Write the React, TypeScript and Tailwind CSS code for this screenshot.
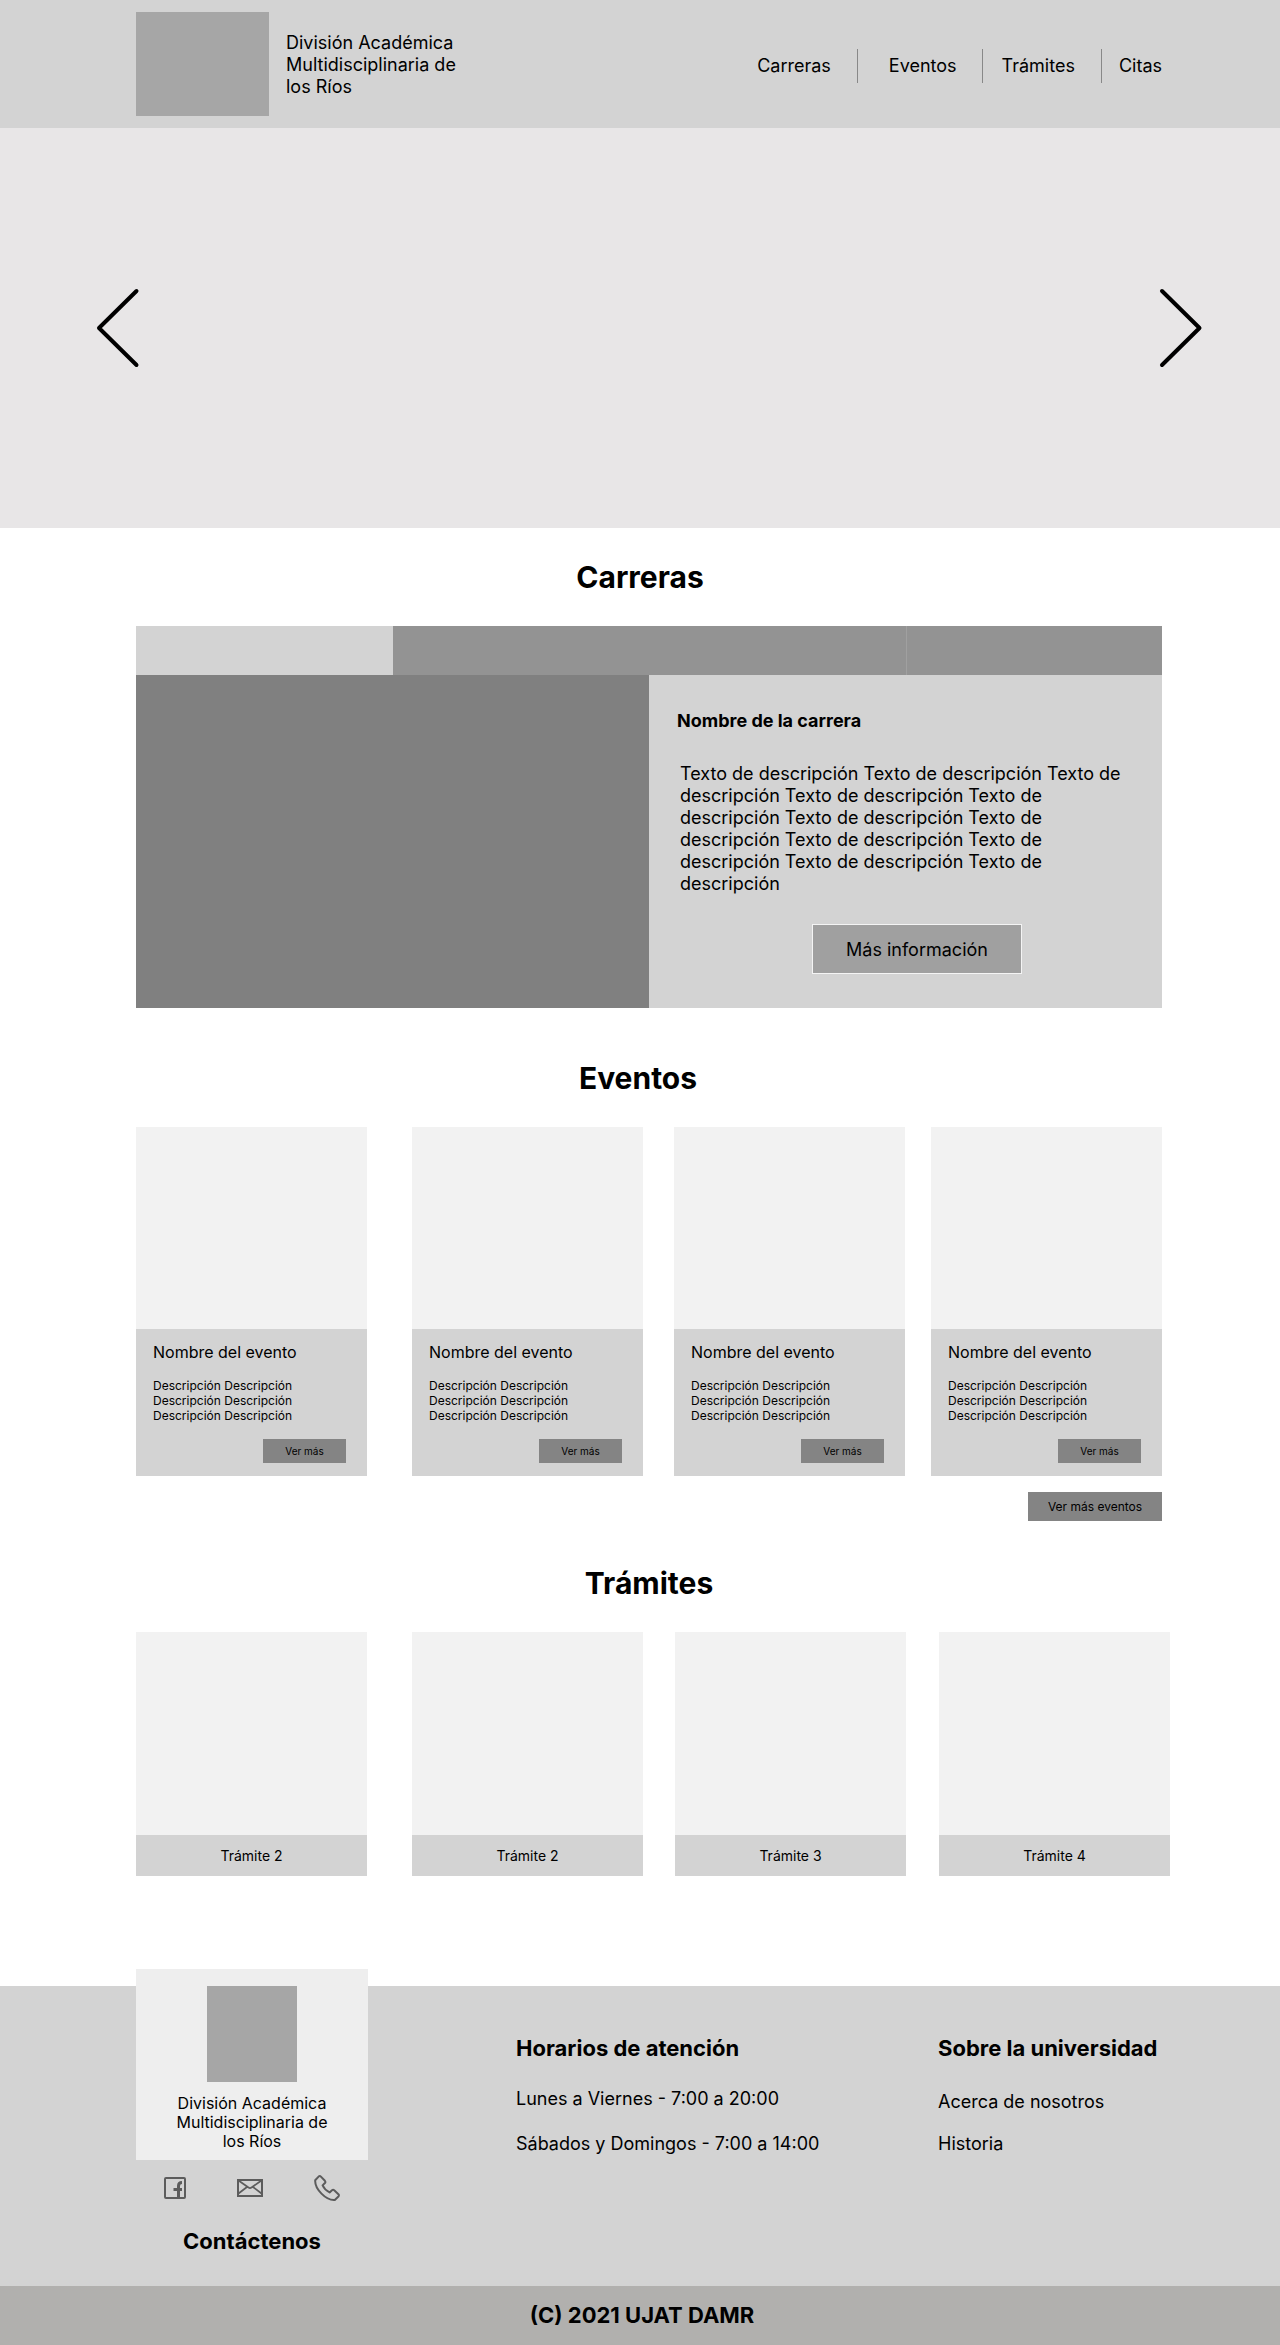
const tabs = ["Carrera 1", "Carrera 2", "Carrera 3", "Carrera 4"];
const events = [1, 2, 3, 4];
const procedures = ["Trámite 2", "Trámite 2", "Trámite 3", "Trámite 4"];

function Divider() {
  return <span className="h-[34px] w-px bg-[#888888]" />;
}

function Header() {
  return (
    <header className="flex items-center justify-between bg-[#d3d3d3] py-3 pr-[118px] pl-[136px]">
      <div className="flex items-center gap-[17px]">
        <div className="h-[104px] w-[133px] bg-[#a6a6a6]" />
        <p className="w-[176px] pt-0.5 text-[18px] leading-[22px]">
          División Académica Multidisciplinaria de los Ríos
        </p>
      </div>
      <nav className="flex items-center pt-1 text-[18px] leading-[22px]">
        <a href="#carreras" className="pr-[26px]">Carreras</a>
        <Divider />
        <a href="#eventos" className="pr-[25px] pl-[31px]">Eventos</a>
        <Divider />
        <a href="#tramites" className="pr-[26px] pl-[19px]">Trámites</a>
        <Divider />
        <a href="#citas" className="pl-[17px]">Citas</a>
      </nav>
    </header>
  );
}

function Hero() {
  return (
    <section className="flex h-[400px] items-center justify-between bg-[#e8e6e7] pr-[77px] pl-24">
      <button type="button" aria-label="Anterior">
        <svg width="44" height="82" viewBox="0 0 44 82" fill="none" stroke="#000" strokeWidth="4" strokeLinecap="round" strokeLinejoin="round">
          <path d="M40.500 4 3 41l37.500 37" />
        </svg>
      </button>
      <button type="button" aria-label="Siguiente">
        <svg width="44" height="82" viewBox="0 0 44 82" fill="none" stroke="#000" strokeWidth="4" strokeLinecap="round" strokeLinejoin="round">
          <path d="M3 4 40.500 41 3 78" />
        </svg>
      </button>
    </section>
  );
}

function Careers() {
  return (
    <section id="carreras">
      <h2 className="py-[31px] text-center text-[30px] leading-9 font-bold">Carreras</h2>
      <div className="pr-[118px] pl-[136px]">
        <div className="grid grid-cols-4" role="tablist">
          {tabs.map((tab, i) => (
            <button
              key={tab}
              type="button"
              role="tab"
              aria-label={tab}
              aria-selected={i === 0}
              className={
                i === 0
                  ? "h-[49px] bg-[#d3d3d3]"
                  : i === 3
                    ? "h-[49px] border-l border-[#a0a0a0] bg-[#939393]"
                    : "h-[49px] bg-[#939393]"
              }
            />
          ))}
        </div>
        <div className="grid grid-cols-2">
          <div className="bg-[#808080]" />
          <div className="flex flex-col bg-[#d3d3d3] pt-[35px] pr-6 pb-[34px] pl-7">
            <h3 className="text-[18px] leading-[22px] font-bold">Nombre de la carrera</h3>
            <p className="mt-[31px] pl-[3px] text-[18px] leading-[22px]">
              Texto de descripción Texto de descripción Texto de descripción Texto de descripción Texto de
              descripción Texto de descripción Texto de descripción Texto de descripción Texto de descripción
              Texto de descripción Texto de descripción
            </p>
            <button
              type="button"
              className="mt-[29px] mr-29 h-[50px] w-[210px] self-end border border-[#f4f4f4] bg-[#a0a0a0] pt-0.5 text-[18px] leading-[22px]"
            >
              Más información
            </button>
          </div>
        </div>
      </div>
    </section>
  );
}

function Events() {
  return (
    <section id="eventos" className="pt-[21px]">
      <h2 className="py-[31px] pr-1 text-center text-[30px] leading-9 font-bold">Eventos</h2>
      <div className="pr-[118px] pl-[136px]">
        <div className="grid grid-cols-[276fr_262fr_257fr_231fr]">
          {events.map((event) => (
            <article key={event} className="max-w-[231px]">
              <div className="h-[202px] bg-[#f2f2f2]" />
              <div className="flex flex-col bg-[#d3d3d3] pt-[13px] pr-[21px] pb-[13px] pl-[17px]">
                <h3 className="text-[16px] leading-5">Nombre del evento</h3>
                <p className="mt-4 text-[12px] leading-[15px]">
                  Descripción Descripción Descripción Descripción Descripción Descripción
                </p>
                <button type="button" className="mt-4 h-6 w-[83px] self-end bg-[#848484] text-[10px] leading-3">
                  Ver más
                </button>
              </div>
            </article>
          ))}
        </div>
        <div className="mt-4 flex justify-end">
          <button type="button" className="h-[29px] w-[134px] bg-[#848484] text-[12px] leading-[15px]">
            Ver más eventos
          </button>
        </div>
      </div>
    </section>
  );
}

function Procedures() {
  return (
    <section id="tramites" className="pt-[13px] pr-[118px] pb-[110px] pl-[136px]">
      <h2 className="py-[31px] text-center text-[30px] leading-9 font-bold">Trámites</h2>
      <div className="-mr-2 grid grid-cols-[276fr_263fr_264fr_231fr]">
        {procedures.map((name, i) => (
          <article key={i} className="max-w-[231px]">
            <div className="h-[203px] bg-[#f2f2f2]" />
            <h3 className="bg-[#d3d3d3] py-3 text-center text-[14px] leading-[17px]">{name}</h3>
          </article>
        ))}
      </div>
    </section>
  );
}

function FacebookIcon() {
  return (
    <svg width="22" height="22" viewBox="0 0 22 22" fill="none" stroke="#5c5c5c" strokeWidth="2">
      <rect x="1" y="1" width="20" height="20" rx="1" />
      <path d="M14.500 21V9c0-2.500 1-3.500 3.500-3.500M9.500 12.500h8.500" strokeWidth="3" />
    </svg>
  );
}

function MailIcon() {
  return (
    <svg width="26" height="18" viewBox="0 0 26 18" fill="none" stroke="#5c5c5c" strokeWidth="2">
      <path d="M1 1h24v16H1z" />
      <path d="M1.500 1.500 11.500 8.500c1 .7 2 .7 3 0l10-7M1.500 14.500 10 8M24.500 14.500 16 8" strokeWidth="1.700" />
    </svg>
  );
}

function PhoneIcon() {
  return (
    <svg width="26" height="26" viewBox="0 0 26 26" fill="none" stroke="#5c5c5c" strokeWidth="2" strokeLinejoin="round">
      <path d="M1.200 5.200 4.600 1.600c.7-.7 1.600-.7 2.300 0l4 4.200c.6.700.6 1.500 0 2.200L8.600 10.400c1.400 3 4 5.600 7 7l2.400-2.200c.7-.6 1.500-.6 2.200 0l4.200 4c.7.700.7 1.600 0 2.300l-3.600 3.400C12 25.600.6 14 1.200 5.200Z" />
    </svg>
  );
}

function Footer() {
  return (
    <footer>
      <div className="grid grid-cols-[380fr_422fr_224fr] bg-[#d3d3d3] pr-[118px] pb-8 pl-[136px]">
        <div className="-mt-[17px] w-[232px]">
          <div className="flex flex-col items-center bg-[#eeeeee] px-8 pt-[17px] pb-[9px]">
            <div className="h-24 w-[90px] bg-[#a6a6a6]" />
            <p className="mt-3 text-center text-[16px] leading-[19px]">
              División Académica Multidisciplinaria de los Ríos
            </p>
          </div>
          <div className="flex items-center justify-between px-7 pt-[15px]">
            <a href="#facebook" aria-label="Facebook"><FacebookIcon /></a>
            <a href="#correo" aria-label="Correo"><MailIcon /></a>
            <a href="#telefono" aria-label="Teléfono"><PhoneIcon /></a>
          </div>
          <h3 className="mt-[27px] text-center text-[22px] leading-[26px] font-bold">Contáctenos</h3>
        </div>
        <div className="pt-[49px]">
          <h3 className="text-[22px] leading-[26px] font-bold">Horarios de atención</h3>
          <p className="mt-[27px] text-[18px] leading-[22px]">Lunes a Viernes - 7:00 a 20:00</p>
          <p className="mt-[23px] text-[18px] leading-[22px]">Sábados y Domingos - 7:00 a 14:00</p>
        </div>
        <div className="flex flex-col items-start pt-[49px]">
          <h3 className="text-[22px] leading-[26px] font-bold whitespace-nowrap">Sobre la universidad</h3>
          <a href="#nosotros" className="mt-[30px] text-[18px] leading-[22px]">Acerca de nosotros</a>
          <a href="#historia" className="mt-5 text-[18px] leading-[22px]">Historia</a>
        </div>
      </div>
      <p className="bg-[#b1b0ae] pt-4 pb-[17px] pl-1 text-center text-[22px] leading-[26px] font-bold">
        (C) 2021 UJAT DAMR
      </p>
    </footer>
  );
}

export default function App() {
  return (
    <div className="min-w-[1024px] bg-white font-['Inter',sans-serif] font-normal text-black">
      <Header />
      <main>
        <Hero />
        <Careers />
        <Events />
        <Procedures />
      </main>
      <Footer />
    </div>
  );
}
